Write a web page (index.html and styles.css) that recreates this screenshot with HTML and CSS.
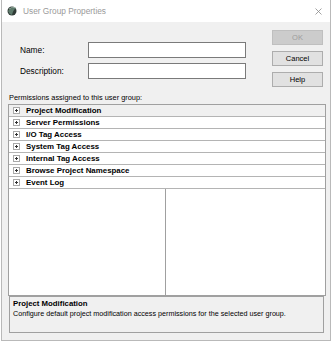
FILE: index.html
```html
<!DOCTYPE html>
<html>
<head>
<meta charset="utf-8">
<link rel="stylesheet" href="styles.css">
</head>
<body>
<div class="window">
  <div class="titlebar">
    <svg class="appicon" width="10" height="10" viewBox="0 0 10 10">
      <circle cx="5" cy="5" r="4.5" fill="#2f3b36"/>
      <path d="M1 5 Q4 1 9 2 Q6 4 5 9 Q2 8 1 5Z" fill="#5d7a6b"/>
      <path d="M2 3 Q5 0.5 8.5 1.5" stroke="#a9c2b4" stroke-width="0.8" fill="none"/>
    </svg>
    <span class="title">User Group Properties</span>
    <svg class="close" width="7" height="7" viewBox="0 0 7 7">
      <path d="M0.5 0.5 L6.5 6.5 M6.5 0.5 L0.5 6.5" stroke="#8a8a8a" stroke-width="0.8"/>
    </svg>
  </div>
  <div class="content">
    <div class="top">
      <div class="fields">
        <label class="lbl">Name:</label>
        <div class="input"></div>
        <label class="lbl">Description:</label>
        <div class="input"></div>
      </div>
      <div class="buttons">
        <div class="btn disabled">OK</div>
        <div class="btn">Cancel</div>
        <div class="btn">Help</div>
      </div>
    </div>
    <div class="perm-label">Permissions assigned to this user group:</div>
    <div class="tree">
      <div class="row selected"><span class="exp"></span><span class="name">Project Modification</span></div>
      <div class="row"><span class="exp"></span><span class="name">Server Permissions</span></div>
      <div class="row"><span class="exp"></span><span class="name">I/O Tag Access</span></div>
      <div class="row"><span class="exp"></span><span class="name">System Tag Access</span></div>
      <div class="row"><span class="exp"></span><span class="name">Internal Tag Access</span></div>
      <div class="row"><span class="exp"></span><span class="name">Browse Project Namespace</span></div>
      <div class="row"><span class="exp"></span><span class="name">Event Log</span></div>
      <div class="panes">
        <div class="pane left"></div>
        <div class="pane right"></div>
      </div>
    </div>
    <div class="desc">
      <div class="desc-title">Project Modification</div>
      <div class="desc-text">Configure default project modification access permissions for the selected user group.</div>
    </div>
  </div>
</div>
</body>
</html>
```
FILE: styles.css
```css
html, body {
  margin: 0;
  padding: 0;
  background: #ffffff;
}
body {
  font-family: "Liberation Sans", Arial, sans-serif;
  color: #000;
}
.window {
  margin-left: 1px;
  width: 330px;
  height: 341px;
  box-sizing: border-box;
  border: 1px solid #b9b9b9;
  border-top: none;
  background: #f0f0f0;
  display: flex;
  flex-direction: column;
}
.titlebar {
  height: 22px;
  flex: none;
  background: #ffffff;
  display: flex;
  align-items: center;
  padding-left: 5px;
  padding-right: 8px;
  box-sizing: border-box;
}
.appicon {
  flex: none;
  margin-right: 6px;
}
.title {
  font-size: 8.3px;
  color: #9a9a9a;
  flex: 1;
}
.close {
  flex: none;
}
.content {
  flex: 1;
  display: flex;
  flex-direction: column;
  padding: 0 7px 0 6px;
}
.top {
  display: flex;
  justify-content: space-between;
  height: 69px;
}
.fields {
  display: grid;
  grid-template-columns: 68px 158px;
  grid-auto-rows: 16px;
  row-gap: 5px;
  align-items: center;
  padding-top: 20px;
  padding-left: 12px;
}
.lbl {
  font-size: 8.3px;
}
.input {
  height: 16px;
  box-sizing: border-box;
  background: #fff;
  border: 1px solid #7a7a7a;
}
.buttons {
  display: flex;
  flex-direction: column;
  gap: 6px;
  padding-top: 8px;
  width: 51px;
}
.btn {
  height: 15px;
  box-sizing: border-box;
  border: 1px solid #adadad;
  background: #e1e1e1;
  font-size: 7.5px;
  display: flex;
  align-items: center;
  justify-content: center;
}
.btn.disabled {
  background: #cccccc;
  border-color: #bfbfbf;
  color: #9d9d9d;
}
.perm-label {
  font-size: 7.4px;
  height: 13px;
  line-height: 13px;
  padding-left: 1px;
}
.tree {
  width: 318px;
  height: 192px;
  box-sizing: border-box;
  border: 1px solid #a0a0a0;
  background: #fff;
  display: flex;
  flex-direction: column;
}
.row {
  height: 12px;
  flex: none;
  box-sizing: border-box;
  border-bottom: 1px solid #b4b4b4;
  display: flex;
  align-items: center;
  padding-left: 4px;
}
.row.selected {
  background: #f0f0f0;
}
.exp {
  width: 7px;
  height: 7px;
  box-sizing: border-box;
  border: 1px solid #a9a9a9;
  background: #fff;
  position: relative;
  margin-right: 6px;
  flex: none;
}
.exp::before {
  content: "";
  position: absolute;
  left: 1px;
  top: 2px;
  width: 3px;
  height: 1px;
  background: #333;
}
.exp::after {
  content: "";
  position: absolute;
  left: 2px;
  top: 1px;
  width: 1px;
  height: 3px;
  background: #333;
}
.name {
  font-size: 7.9px;
  font-weight: bold;
}
.panes {
  flex: 1;
  display: grid;
  grid-template-columns: 157px 1fr;
}
.pane.left {
  border-right: 1px solid #a0a0a0;
}
.desc {
  width: 315px;
  height: 37px;
  box-sizing: border-box;
  border: 1px solid #a0a0a0;
  background: #f0f0f0;
  padding: 2px 3px;
  margin-left: 1px;
}
.desc-title {
  font-size: 7.8px;
  font-weight: bold;
  line-height: 10px;
}
.desc-text {
  font-size: 7.2px;
  line-height: 10px;
}
```
